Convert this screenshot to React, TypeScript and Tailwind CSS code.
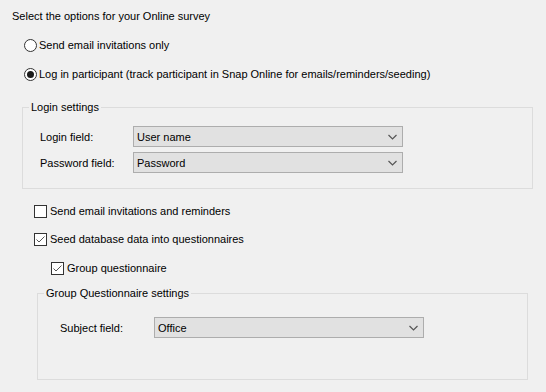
const Radio = ({ checked, label }: { checked?: boolean; label: string }) => (
  <div className="flex items-center h-[16px] gap-[2px]">
    <span className="w-[13px] h-[13px] rounded-full border border-[#333333] bg-white flex items-center justify-center">
      {checked && <span className="w-[7px] h-[7px] rounded-full bg-[#1a1a1a]" />}
    </span>
    <span>{label}</span>
  </div>
);

const Check = ({ checked, label }: { checked?: boolean; label: string }) => (
  <div className="flex items-center h-[16px] gap-[3px]">
    <span className="w-[13px] h-[13px] border border-[#333333] bg-white flex items-center justify-center">
      {checked && (
        <svg width="11" height="11" viewBox="0 0 11 11">
          <path d="M1.5 5.5 L4 8 L9.5 2.5" fill="none" stroke="#555555" strokeWidth="1" />
        </svg>
      )}
    </span>
    <span>{label}</span>
  </div>
);

const Combo = ({ value }: { value: string }) => (
  <div className="w-[270px] h-[21px] border border-[#adadad] bg-[#e1e1e1] flex items-center justify-between pl-[3px] pr-[5px]">
    <span>{value}</span>
    <svg width="9" height="6" viewBox="0 0 9 6">
      <path d="M0.5 1 L4.5 5 L8.5 1" fill="none" stroke="#555555" strokeWidth="1.2" />
    </svg>
  </div>
);

const Field = ({ label, value, labelW }: { label: string; value: string; labelW: string }) => (
  <div className="flex items-center">
    <span className={labelW}>{label}</span>
    <Combo value={value} />
  </div>
);

export default function App() {
  return (
    <div
      className="w-[546px] h-[392px] bg-[#f0f0f0] text-[11px] leading-[16px] text-black overflow-hidden"
      style={{ fontFamily: '"Liberation Sans", Arial, sans-serif' }}
    >
      <div className="pt-[8px] pl-[12px] h-[24px]">Select the options for your Online survey</div>

      <div className="ml-[24px] mt-[13px]">
        <Radio label="Send email invitations only" />
      </div>
      <div className="ml-[24px] mt-[13px]">
        <Radio checked label="Log in participant (track participant in Snap Online for emails/reminders/seeding)" />
      </div>

      <fieldset className="ml-[22px] mt-[18px] w-[511px] border border-[#dcdcdc] px-0 pt-[12px] pb-[15px]">
        <legend className="ml-[6px] px-[2px] leading-[14px]">Login settings</legend>
        <div className="flex flex-col gap-[5px] pl-[17px]">
          <Field label="Login field:" value="User name" labelW="w-[93px]" />
          <Field label="Password field:" value="Password" labelW="w-[93px]" />
        </div>
      </fieldset>

      <div className="ml-[34px] mt-[14px]">
        <Check label="Send email invitations and reminders" />
      </div>
      <div className="ml-[34px] mt-[12px]">
        <Check checked label="Seed database data into questionnaires" />
      </div>
      <div className="ml-[51px] mt-[13px]">
        <Check checked label="Group questionnaire" />
      </div>

      <fieldset className="ml-[37px] mt-[10px] w-[491px] border border-[#dcdcdc] px-0 pt-[17px] pb-[41px]">
        <legend className="ml-[6px] px-[2px] leading-[14px]">Group Questionnaire settings</legend>
        <div className="pl-[22px]">
          <Field label="Subject field:" value="Office" labelW="w-[94px]" />
        </div>
      </fieldset>
    </div>
  );
}
